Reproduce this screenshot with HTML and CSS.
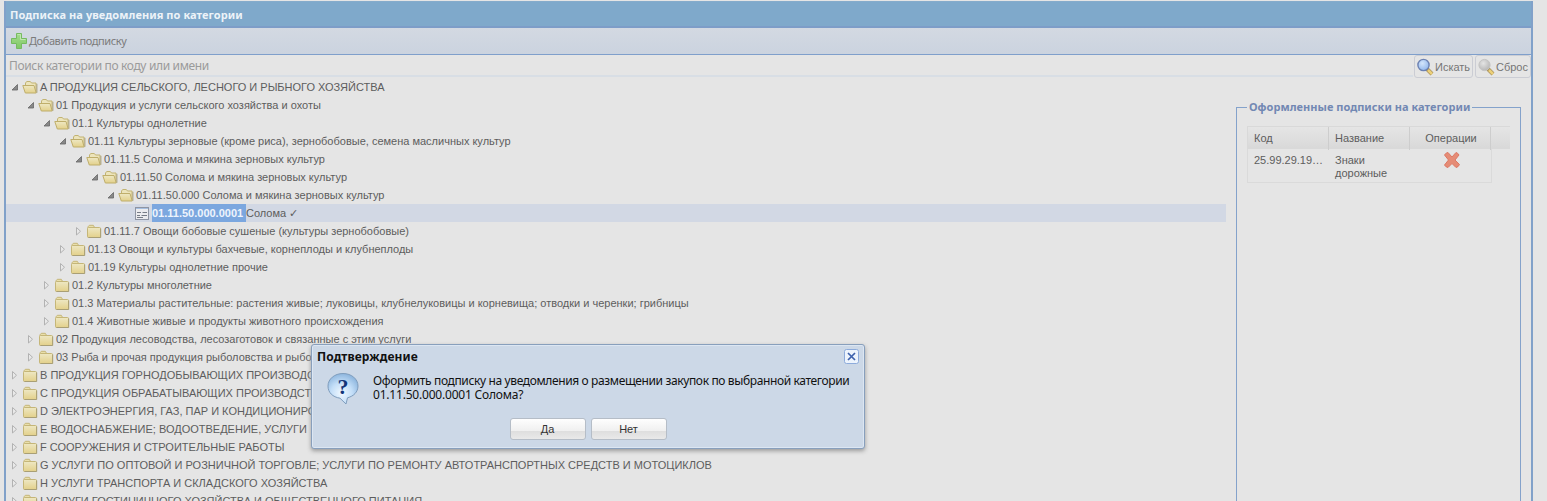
FILE: index.html
```html
<!DOCTYPE html>
<html lang="ru">
<head>
<meta charset="utf-8">
<title>Подписка на уведомления по категории</title>
<link rel="stylesheet" href="styles.css">
</head>
<body>
<svg class="defs" width="0" height="0">
  <defs>
    <linearGradient id="gFolder" x1="0" y1="0" x2="0" y2="1"><stop offset="0" stop-color="#eee8c4"/><stop offset="1" stop-color="#e3d08a"/></linearGradient>
    <linearGradient id="gPlus" x1="0" y1="0" x2="0" y2="1"><stop offset="0" stop-color="#a5dc8f"/><stop offset="1" stop-color="#7fc866"/></linearGradient>
    <radialGradient id="gBubble" cx=".45" cy=".65" r=".65"><stop offset="0" stop-color="#f0f8ff"/><stop offset=".55" stop-color="#c3def8"/><stop offset="1" stop-color="#8eb6de"/></radialGradient>
    <radialGradient id="gLens" cx=".4" cy=".35" r=".7"><stop offset="0" stop-color="#d3e5fb"/><stop offset="1" stop-color="#8fb5ec"/></radialGradient>
    <radialGradient id="gLensGray" cx=".4" cy=".35" r=".7"><stop offset="0" stop-color="#e4e4e4"/><stop offset="1" stop-color="#b4b4b4"/></radialGradient>
  </defs>
  <symbol id="open" viewBox="0 0 16 16">
    <path d="M3.500 12.500V4l1.200-1.500h3.600l1.200 1.500h4.500v9.500" fill="#ece4bb" stroke="#c2b373"/>
    <path d="M.8 6.500h11.200l2.200 7.500H3.300z" fill="url(#gFolder)" stroke="#bfae6b"/>
    <path d="M14.900 4.800v9" fill="none" stroke="#aaa27e"/>
  </symbol>
  <symbol id="closed" viewBox="0 0 16 16">
    <path d="M2 13.500V3.800l1.300-1.500h4l1.200 2" fill="#e9dfab" stroke="#c5b678"/>
    <rect x="1.500" y="4.500" width="13" height="10" rx="1" fill="url(#gFolder)" stroke="#c5b678"/>
    <path d="M14.700 5.500v9H2.500" fill="none" stroke="#a99f75"/>
  </symbol>
  <symbol id="leaf" viewBox="0 0 16 16">
    <rect x="1.500" y="2.500" width="13" height="12" fill="#ececee" stroke="#8f95a2"/>
    <path d="M2 3.500h12" stroke="#a6bfe0"/>
    <path d="M3 7.500h4M8.500 7.500h4.500M3 10.500h3M7.500 10.500h5.500M3 12.500h6" stroke="#777c86"/>
  </symbol>
  <symbol id="down" viewBox="0 0 16 16"><path d="M11.500 5.500v5.500h-5.500z" fill="#888" stroke="#666" stroke-width=".8"/></symbol>
  <symbol id="right" viewBox="0 0 16 16"><path d="M6.500 4.500v7.500l4-3.750z" fill="#e9e9e9" stroke="#b2b2b2"/></symbol>
</svg>

<div class="panel">
  <div class="panel-title">Подписка на уведомления по категории</div>
  <div class="toolbar">
    <svg class="plus" viewBox="0 0 16 16"><path d="M5.500 .5h5v5h5v5h-5v5h-5v-5h-5v-5h5z" fill="url(#gPlus)" stroke="#76bb60"/><path d="M6.500 1.500h3v5h5" fill="none" stroke="#c0e8b0"/></svg>
    <span>Добавить подписку</span>
  </div>
  <div class="search">
    <div class="field">Поиск категории по коду или имени</div>
    <div class="btn find"><svg viewBox="0 0 18 18"><path d="m11 11 5 5" stroke="#a8915b" stroke-width="4"/><path d="m12 12 4 4" stroke="#ecd078" stroke-width="2.500"/><circle cx="7.500" cy="7" r="5.600" fill="url(#gLens)" stroke="#6d82b2" stroke-width="1.400"/></svg><span>Искать</span></div>
    <div class="btn reset"><svg viewBox="0 0 18 18"><path d="m11 11 5 5" stroke="#a8915b" stroke-width="4"/><path d="m12 12 4 4" stroke="#ecd078" stroke-width="2.500"/><circle cx="7.500" cy="7" r="5.600" fill="url(#gLensGray)" stroke="#c4c4c4" stroke-width="1"/></svg><span>Сброс</span></div>
  </div>
  <div class="content">
    <div class="tree">
      <div class="row l0"><svg><use href="#down"/></svg><svg><use href="#open"/></svg><span>A ПРОДУКЦИЯ СЕЛЬСКОГО, ЛЕСНОГО И РЫБНОГО ХОЗЯЙСТВА</span></div>
      <div class="row l1"><svg><use href="#down"/></svg><svg><use href="#open"/></svg><span>01 Продукция и услуги сельского хозяйства и охоты</span></div>
      <div class="row l2"><svg><use href="#down"/></svg><svg><use href="#open"/></svg><span>01.1 Культуры однолетние</span></div>
      <div class="row l3"><svg><use href="#down"/></svg><svg><use href="#open"/></svg><span>01.11 Культуры зерновые (кроме риса), зернобобовые, семена масличных культур</span></div>
      <div class="row l4"><svg><use href="#down"/></svg><svg><use href="#open"/></svg><span>01.11.5 Солома и мякина зерновых культур</span></div>
      <div class="row l5"><svg><use href="#down"/></svg><svg><use href="#open"/></svg><span>01.11.50 Солома и мякина зерновых культур</span></div>
      <div class="row l6"><svg><use href="#down"/></svg><svg><use href="#open"/></svg><span>01.11.50.000 Солома и мякина зерновых культур</span></div>
      <div class="row l7 selected"><svg></svg><svg><use href="#leaf"/></svg><span><b>01.11.50.000.0001</b>Солома ✓</span></div>
      <div class="row l4"><svg><use href="#right"/></svg><svg><use href="#closed"/></svg><span>01.11.7 Овощи бобовые сушеные (культуры зернобобовые)</span></div>
      <div class="row l3"><svg><use href="#right"/></svg><svg><use href="#closed"/></svg><span>01.13 Овощи и культуры бахчевые, корнеплоды и клубнеплоды</span></div>
      <div class="row l3"><svg><use href="#right"/></svg><svg><use href="#closed"/></svg><span>01.19 Культуры однолетние прочие</span></div>
      <div class="row l2"><svg><use href="#right"/></svg><svg><use href="#closed"/></svg><span>01.2 Культуры многолетние</span></div>
      <div class="row l2"><svg><use href="#right"/></svg><svg><use href="#closed"/></svg><span>01.3 Материалы растительные: растения живые; луковицы, клубнелуковицы и корневища; отводки и черенки; грибницы</span></div>
      <div class="row l2"><svg><use href="#right"/></svg><svg><use href="#closed"/></svg><span>01.4 Животные живые и продукты животного происхождения</span></div>
      <div class="row l1"><svg><use href="#right"/></svg><svg><use href="#closed"/></svg><span>02 Продукция лесоводства, лесозаготовок и связанные с этим услуги</span></div>
      <div class="row l1"><svg><use href="#right"/></svg><svg><use href="#closed"/></svg><span>03 Рыба и прочая продукция рыболовства и рыбо</span></div>
      <div class="row l0"><svg><use href="#right"/></svg><svg><use href="#closed"/></svg><span>B ПРОДУКЦИЯ ГОРНОДОБЫВАЮЩИХ ПРОИЗВОДС</span></div>
      <div class="row l0"><svg><use href="#right"/></svg><svg><use href="#closed"/></svg><span>C ПРОДУКЦИЯ ОБРАБАТЫВАЮЩИХ ПРОИЗВОДСТ</span></div>
      <div class="row l0"><svg><use href="#right"/></svg><svg><use href="#closed"/></svg><span>D ЭЛЕКТРОЭНЕРГИЯ, ГАЗ, ПАР И КОНДИЦИОНИРО</span></div>
      <div class="row l0"><svg><use href="#right"/></svg><svg><use href="#closed"/></svg><span>E ВОДОСНАБЖЕНИЕ; ВОДООТВЕДЕНИЕ, УСЛУГИ</span></div>
      <div class="row l0"><svg><use href="#right"/></svg><svg><use href="#closed"/></svg><span>F СООРУЖЕНИЯ И СТРОИТЕЛЬНЫЕ РАБОТЫ</span></div>
      <div class="row l0"><svg><use href="#right"/></svg><svg><use href="#closed"/></svg><span>G УСЛУГИ ПО ОПТОВОЙ И РОЗНИЧНОЙ ТОРГОВЛЕ; УСЛУГИ ПО РЕМОНТУ АВТОТРАНСПОРТНЫХ СРЕДСТВ И МОТОЦИКЛОВ</span></div>
      <div class="row l0"><svg><use href="#right"/></svg><svg><use href="#closed"/></svg><span>H УСЛУГИ ТРАНСПОРТА И СКЛАДСКОГО ХОЗЯЙСТВА</span></div>
      <div class="row l0"><svg><use href="#right"/></svg><svg><use href="#closed"/></svg><span>I УСЛУГИ ГОСТИНИЧНОГО ХОЗЯЙСТВА И ОБЩЕСТВЕННОГО ПИТАНИЯ</span></div>
    </div>
    <fieldset class="subs">
      <legend>Оформленные подписки на категории</legend>
      <div class="grid head"><div>Код</div><div>Название</div><div class="ops">Операции</div><div></div></div>
      <div class="grid body"><div>25.99.29.19…</div><div>Знаки дорожные</div><div class="ops"><svg viewBox="0 0 18 18"><path d="M1.500 4Q3 1.500 5 1.500L9 6l4-4.500q2 .5 3 2.500l-4 5 4.500 4.500q-1 2.500-3.500 3L9 12.500 5 16.500q-2.500-.5-3.500-2.500l4-5z" fill="#e58c76" stroke="#dd7864" stroke-linejoin="round"/></svg></div></div>
    </fieldset>
  </div>
</div>

<div class="dialog">
  <div class="dialog-head"><span>Подтверждение</span>
    <svg viewBox="0 0 15 15"><rect x=".5" y=".5" width="14" height="14" rx="2" fill="#edf4fd" stroke="#8dabdb"/><path d="m4 4 7 7m0-7-7 7" stroke="#3d61ad" stroke-width="1.700"/></svg>
  </div>
  <div class="message">
    <svg class="bubble" viewBox="0 0 34 34"><path d="M17 1.500c8.500 0 15 5.500 15 12.500 0 6-4.500 10.300-10.500 11.800L20 32l-6-5.800C6.500 25 2 20.500 2 14 2 7 8.500 1.500 17 1.500z" fill="url(#gBubble)" stroke="#7f9dbd"/><text x="17" y="22" text-anchor="middle" class="qmark">?</text></svg>
    <div class="copy"><div class="line1">Оформить подписку на уведомления о размещении закупок по выбранной категории</div><div class="line2">01.11.50.000.0001 Солома?</div></div>
  </div>
  <div class="actions"><div>Да</div><div>Нет</div></div>
</div>
</body>
</html>
```

FILE: styles.css
```css
* { box-sizing: border-box; }
body {
  margin: 0; height: 501px; overflow: hidden; background: #e5e5e5;
  font: 11px/18px "Liberation Sans", Arial, sans-serif; color: #5d5d5d;
}
.defs { position: absolute; }
.panel {
  width: 1529px; height: 500px; margin: 0 0 0 4px; overflow: hidden;
  border: solid #81a1c9; border-width: 0 2px; background: #e5e5e5;
}
body { padding-top: 1px; }
.panel-title {
  height: 27px; padding-left: 4px;
  background: #7fa9cb; border-bottom: 2px solid #7d9dc8; border-top: 1px solid #85abcb;
  font: bold 11px/26px "Noto Sans", sans-serif; color: #edf3f8; letter-spacing: .07px;
}
.toolbar {
  height: 27px; padding-left: 5px; display: flex; align-items: center; gap: 2px;
  background: linear-gradient(#d3d9e2, #cbd3df); border-bottom: 1px solid #7f9fcb;
  font-family: "Noto Sans", sans-serif; color: #7b7b7b; letter-spacing: -.41px;
}
.plus { width: 16px; height: 16px; }
.search { height: 23px; display: flex; }
.field {
  width: 1407px; height: 22px; padding-left: 3px; border-bottom: 2px solid #d8dee5;
  font: 12px/21px "Noto Sans", sans-serif; color: #9b9b9b; letter-spacing: -.35px;
}
.btn {
  height: 23px; display: flex; align-items: center; gap: 1px; padding-left: 1px;
  border: 1px solid #cbcdd4; border-radius: 3px; color: #757575; white-space: nowrap;
}
.btn svg { width: 18px; height: 18px; flex: none; }
.find { width: 59px; margin-left: 1px; }
.reset { width: 56px; margin-left: 2px; }
.content { display: flex; height: 423px; overflow: hidden; }
.tree { width: 1220px; flex: none; }
.row { height: 18px; display: flex; align-items: center; white-space: nowrap; }
.row svg { width: 16px; height: 16px; flex: none; }
.row span { margin-left: 2px; }
.l1 { padding-left: 16px; }
.l2 { padding-left: 32px; }
.l3 { padding-left: 48px; }
.l4 { padding-left: 64px; }
.l5 { padding-left: 80px; }
.l6 { padding-left: 96px; }
.l7 { padding-left: 112px; }
.selected { background: #d2d8e4; }
.selected b { display: inline-block; width: 94px; height: 18px; background: #7ba7df; color: #eef4fc; }
.subs {
  width: 285px; height: 440px; margin: 19px 0 0 10px; padding: 9px 10px;
  border: 1px solid #84a2cb;
}
.subs legend {
  height: 20px; padding: 0 2px; font: bold 11px/20px "Noto Sans", sans-serif; color: #7288b3; white-space: nowrap; letter-spacing: .03px;
}
.grid { display: grid; grid-template-columns: 81px 81px 81px 19px; }
.grid.head { height: 23px; background: linear-gradient(#e5e5e5, #d9d9d9); border: solid #d9d9d9; border-width: 1px 0 1px 1px; line-height: 23px; }
.head > div { padding-left: 6px; border-right: 1px solid #cdcdcd; }
.head > div:last-child { border: 0; }
.grid .ops { padding: 0 0 0 2px; text-align: center; }
.grid.body { width: 245px; height: 34px; grid-template-columns: 81px 81px 81px; border: 1px solid #dadada; border-top: 0; line-height: 13px; }
.body > div { padding: 5px 10px 0 6px; }
.body > div:first-child { padding-right: 0; }
.body svg { width: 18px; height: 18px; margin-top: 2px; }
.dialog {
  position: absolute; left: 311px; top: 344px; width: 554px; height: 105px;
  padding: 4px 5px; border: 1px solid #889fbc; border-radius: 3px;
  background: #ccd8e7; box-shadow: inset 0 0 0 1px #dce6f2, 0 2px 4px #999;
  color: #111;
}
.dialog-head { display: flex; justify-content: space-between; font: bold 12px/16px "Noto Sans", sans-serif; letter-spacing: .1px; }
.dialog-head svg { width: 15px; height: 15px; }
.message { display: flex; height: 53px; padding: 7px 0 0 9px; }
.bubble { width: 34px; height: 34px; flex: none; }
.qmark { font: bold 22px "Liberation Serif", serif; fill: #133579; }
.copy { padding: 2px 0 0 13px; font: 12px/14px "Noto Sans", sans-serif; white-space: nowrap; }
.line1 { letter-spacing: -.37px; }
.line2 { letter-spacing: -.2px; }
.actions { display: flex; justify-content: center; gap: 5px; }
.actions div {
  width: 76px; height: 22px; border: 1px solid #b5bdc7; border-radius: 3px; text-align: center; line-height: 20px;
  background: linear-gradient(#fefefe 0%, #f0f0f0 58%, #dedede 60%, #e9e9e9 100%); color: #333;
}
```
